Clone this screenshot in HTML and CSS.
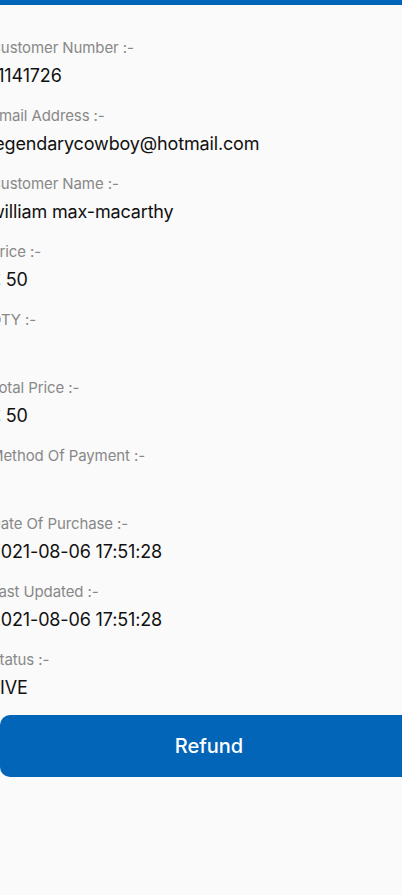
FILE: index.html
```html
<!DOCTYPE html>
<html>
<head>
<meta charset="utf-8">
<link rel="stylesheet" href="styles.css">
</head>
<body>
<div class="topbar"></div>
<main class="details">
  <div class="field"><div class="label">Customer Number :-</div><div class="value">11141726</div></div>
  <div class="field"><div class="label">Email Address :-</div><div class="value">legendarycowboy@hotmail.com</div></div>
  <div class="field"><div class="label">Customer Name :-</div><div class="value">william max-macarthy</div></div>
  <div class="field"><div class="label">Price :-</div><div class="value">£ 50</div></div>
  <div class="field"><div class="label">QTY :-</div><div class="value"></div></div>
  <div class="field"><div class="label">Total Price :-</div><div class="value">£ 50</div></div>
  <div class="field"><div class="label">Method Of Payment :-</div><div class="value"></div></div>
  <div class="field"><div class="label">Date Of Purchase :-</div><div class="value">2021-08-06 17:51:28</div></div>
  <div class="field"><div class="label">Last Updated :-</div><div class="value">2021-08-06 17:51:28</div></div>
  <div class="field"><div class="label">Status :-</div><div class="value">LIVE</div></div>
  <button class="refund">Refund</button>
</main>
</body>
</html>
```
FILE: styles.css
```css
html, body {
  margin: 0;
  padding: 0;
  background: #fafafa;
  overflow: hidden;
}
body {
  width: 402px;
  height: 895px;
  font-family: Inter, "Noto Sans", sans-serif;
}
.topbar {
  height: 5px;
  background: #0265b7;
}
.details {
  display: flex;
  flex-direction: column;
  gap: 12px;
  padding-top: 29px;
  margin-left: -10px;
  width: 430px;
}
.field {
  display: flex;
  flex-direction: column;
}
.label {
  height: 28px;
  line-height: 28px;
  font-size: 15px;
  letter-spacing: -0.1px;
  color: #888888;
}
.value {
  height: 28px;
  line-height: 28px;
  font-size: 18px;
  letter-spacing: -0.15px;
  color: #111111;
}
.refund {
  margin-top: 1px;
  margin-left: 10px;
  height: 62px;
  width: 418px;
  border: none;
  border-radius: 10px;
  background: #0265b7;
  color: #ffffff;
  font-family: Inter, "Noto Sans", sans-serif;
  font-size: 20px;
  font-weight: 500;
}
```
